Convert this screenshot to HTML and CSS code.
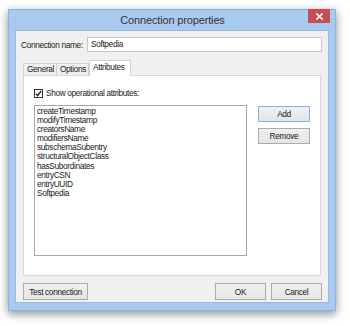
FILE: index.html
```html
<!DOCTYPE html>
<html>
<head>
<meta charset="utf-8">
<link rel="stylesheet" href="styles.css">
</head>
<body>
<div class="window">
  <div class="titlebar">
    <span class="spacer"></span>
    <div class="title">Connection properties</div>
    <div class="close">
      <svg width="7" height="7" viewBox="0 0 7 7"><path d="M1 1L6 6M6 1L1 6" stroke="#fff" stroke-width="1.6" stroke-linecap="square"/></svg>
    </div>
  </div>
  <div class="client">
    <div class="name-row">
      <span class="label">Connection name:</span>
      <div class="input">Softpedia</div>
    </div>
    <div class="tabs">
      <div class="tab">General</div>
      <div class="tab">Options</div>
      <div class="tab active">Attributes</div>
    </div>
    <div class="panel">
      <div class="check-row">
        <span class="checkbox"><svg width="7" height="7" viewBox="0 0 7 7"><path d="M0.8 3.6L2.6 5.6L6.2 1" fill="none" stroke="#222" stroke-width="1.4"/></svg></span>
        <span>Show operational attributes:</span>
      </div>
      <div class="attr-area">
        <div class="listbox">
          <div>createTimestamp</div>
          <div>modifyTimestamp</div>
          <div>creatorsName</div>
          <div>modifiersName</div>
          <div>subschemaSubentry</div>
          <div>structuralObjectClass</div>
          <div>hasSubordinates</div>
          <div>entryCSN</div>
          <div>entryUUID</div>
          <div>Softpedia</div>
        </div>
        <div class="side-buttons">
          <button class="btn default">Add</button>
          <button class="btn">Remove</button>
        </div>
      </div>
    </div>
    <div class="footer">
      <button class="btn test">Test connection</button>
      <span class="grow"></span>
      <button class="btn ok">OK</button>
      <button class="btn ok">Cancel</button>
    </div>
  </div>
</div>
</body>
</html>
```

FILE: styles.css
```css
* { box-sizing: border-box; }
html, body { margin: 0; padding: 0; background: #ffffff; }
body {
  width: 350px;
  height: 326px;
  overflow: hidden;
  font-family: "Liberation Sans", Arial, sans-serif;
  font-size: 8.3px;
  letter-spacing: -0.35px;
  color: #1a1a1a;
}
.window {
  margin: 9px 0 0 8px;
  width: 328px;
  height: 302px;
  padding: 0 6px 7px 6px;
  background: #a9caf0;
  border: 1px solid #8fb3e0;
  box-shadow: 0 3px 9px rgba(0,0,0,0.45);
  display: flex;
  flex-direction: column;
}
.titlebar {
  height: 20px;
  display: grid;
  grid-template-columns: 22px 1fr 22px;
  padding: 0 0 0 0;
  margin-right: -1px;
}
.title {
  font-size: 11px;
  letter-spacing: -0.15px;
  color: #333333;
  text-align: center;
  line-height: 20px;
}
.close {
  width: 22px;
  height: 14px;
  margin-top: -1px;
  background: #c74f4f;
  display: flex;
  align-items: center;
  justify-content: center;
}
.client {
  flex: 1;
  background: #f0f0f0;
  display: flex;
  flex-direction: column;
  border: 1px solid #9ab8dc;
}
.name-row {
  margin-top: 6px;
  display: flex;
  align-items: center;
  padding: 0 6px 0 5px;
  height: 15px;
}
.label { width: 66px; }
.input {
  flex: 1;
  height: 15px;
  background: #fff;
  border: 1px solid #c8c8c8;
  padding: 0 3px;
  line-height: 13px;
}
.tabs {
  margin-top: 8px;
  display: flex;
  padding-left: 7px;
  height: 15px;
  align-items: flex-end;
  position: relative;
  z-index: 1;
}
.tab {
  height: 12px;
  border: 1px solid #d0d0d0;
  border-bottom: none;
  background: linear-gradient(#f3f3f3, #ebebeb);
  padding: 0 3px;
  line-height: 11px;
  margin-right: -1px;
}
.tab:nth-child(1) { width: 34px; }
.tab:nth-child(2) { width: 33px; }
.tab.active {
  height: 16px;
  margin-bottom: -1px;
  background: #ffffff;
  width: 42px;
  padding-top: 1px;
  margin-left: 1px;
}
.panel {
  margin: 0 7px;
  height: 201px;
  background: #ffffff;
  border: 1px solid #d9d9d9;
  padding: 12px 10px 0 10px;
}
.check-row {
  display: flex;
  align-items: center;
  height: 10px;
}
.checkbox {
  width: 9px;
  height: 9px;
  border: 1px solid #333;
  background: #fff;
  margin-right: 3px;
  display: flex;
  align-items: center;
  justify-content: center;
}
.attr-area {
  margin-top: 7px;
  display: flex;
  align-items: flex-start;
}
.listbox {
  width: 215px;
  height: 151px;
  border: 1px solid #a8a8a8;
  background: #fff;
  padding: 1px 2px;
  line-height: 9.1px;
}
.side-buttons {
  margin-left: 11px;
  margin-top: 1px;
  display: flex;
  flex-direction: column;
  gap: 6px;
}
.btn {
  font: inherit;
  letter-spacing: inherit;
  color: #1a1a1a;
  background: linear-gradient(#f0f0f0, #e5e5e5);
  border: 1px solid #acacac;
  padding: 0;
  margin: 0;
  height: 16px;
  width: 52px;
  text-align: center;
}
.btn.default { border-color: #7eb4ea; }
.footer {
  margin-top: 7px;
  display: flex;
  gap: 5px;
  padding: 0 6px 0 7px;
}
.grow { flex: 1; }
.btn.test { width: 65px; height: 17px; }
.btn.ok { width: 51px; height: 17px; }
```
